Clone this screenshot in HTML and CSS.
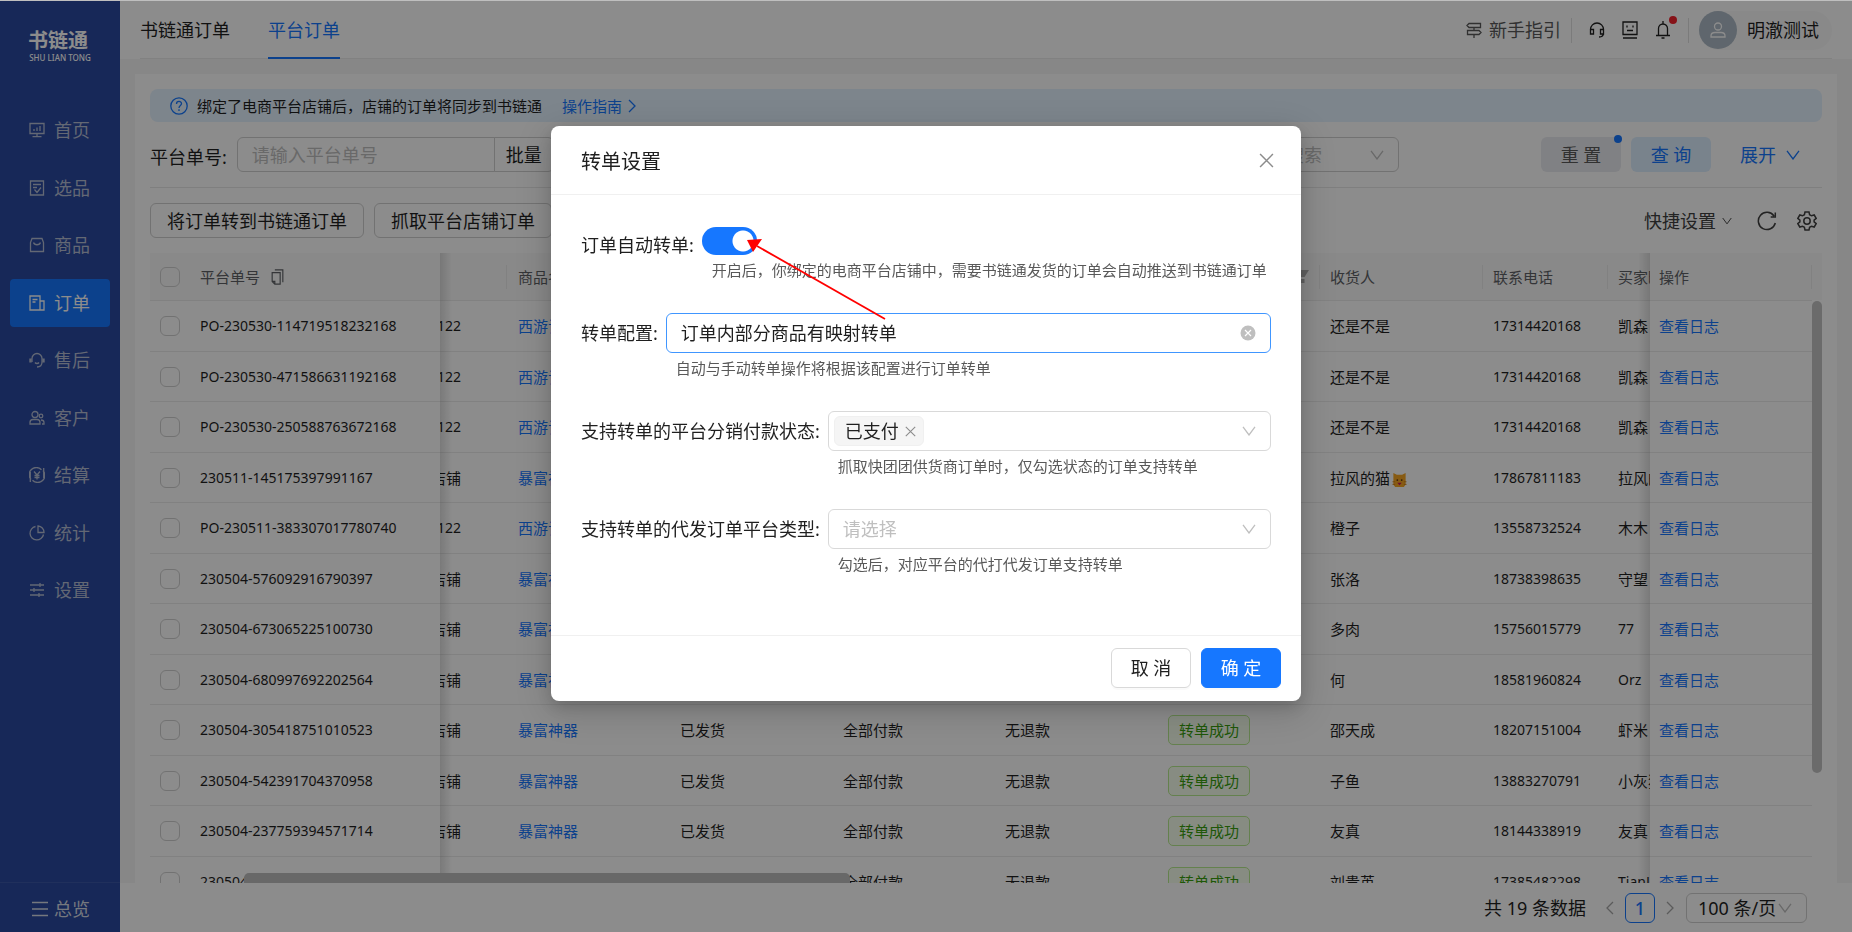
FILE: index.html
```html
<!DOCTYPE html>
<html lang="zh-CN">
<head>
<meta charset="utf-8">
<meta name="viewport" content="width=device-width, initial-scale=1">
<title>书链通 - 平台订单</title>
<link rel="stylesheet" href="styles.css">
</head>
<body>
<svg class="sprite" aria-hidden="true">
  <symbol id="chevron" viewBox="0 0 14 10"><path d="M1 .8 7 9 13 .8" fill="none" stroke="currentColor" stroke-width="1.3"/></symbol>
  <symbol id="cross" viewBox="0 0 14 14"><path d="M1 1l12 12M13 1 1 13" fill="none" stroke="currentColor" stroke-width="1.4"/></symbol>
</svg>
<div class="app">
  <aside class="sidebar">
    <div class="logo"><span class="logo-name">书链通</span><span class="logo-sub">SHU LIAN TONG</span></div>
    <nav class="menu">
      <a class="menu-item" href="#"><svg class="icon16" viewBox="0 0 16 16"><path d="M1 1.500h14v10H1zM8 11.500v3M3.500 14.700h9M5 9V7M8 9V5.500M11 9V4"/></svg>首页</a>
      <a class="menu-item" href="#"><svg class="icon16" viewBox="0 0 16 16"><path d="M1.500 1h13v14h-13zM4 4.500h8M4 7.500h4M5.500 9.500l2.500 3 4-5"/></svg>选品</a>
      <a class="menu-item" href="#"><svg class="icon16" viewBox="0 0 16 16"><path d="M3 1.500h10l1.500 4v9h-13v-9zM4.500 5.500c1 3 6 3 7 0"/></svg>商品</a>
      <a class="menu-item active" href="#"><svg class="icon16" viewBox="0 0 16 16"><path d="M1 1h10v14H1zM11 6h4v9h-4M3.500 4.500h5M3.500 7h3"/></svg>订单</a>
      <a class="menu-item" href="#"><svg class="icon16" viewBox="0 0 16 16"><path d="M3 10V6.500a5 5 0 0 1 10 0V10c0 3-2 5-5 5M6 10.500c1 1.300 3 1.300 4 0"/><path d="M1.500 6.500v4M14.500 6.500v4" stroke-width="2.400"/></svg>售后</a>
      <a class="menu-item" href="#"><svg class="icon16" viewBox="0 0 16 16"><circle cx="6" cy="4.500" r="3"/><circle cx="12" cy="6" r="1.800"/><path d="M1 14v-1.500c0-2 1.500-3 3-3h4c1.500 0 3 1 3 3V14zM12 10c2 0 3 1 3 2.500V14h-2"/></svg>客户</a>
      <a class="menu-item" href="#"><svg class="icon16" viewBox="0 0 16 16"><path d="M2 12.500A7 7 0 0 1 12.500 2.800M14 3.500A7 7 0 0 1 3.500 13.200M14.700 1v10M1.300 5v10M5 4.500l3 3.500 3-3.500M8 8v4.500M5.500 8.500h5M5.500 10.500h5"/></svg>结算</a>
      <a class="menu-item" href="#"><svg class="icon16" viewBox="0 0 16 16"><path d="M6.500 1.500a6.800 6.800 0 1 0 8 8M9 1v6.500h6C15 4 12.500 1.200 9 1z"/></svg>统计</a>
      <a class="menu-item" href="#"><svg class="icon16" viewBox="0 0 16 16"><path d="M1 3h14M1 8h14M1 13h14M11 1v4M5 6v4M10 11v4"/></svg>设置</a>
    </nav>
    <a class="overview" href="#"><svg class="icon16" viewBox="0 0 16 16"><path d="M0 1.500h16M0 8h16M0 14.500h16"/></svg>总览</a>
  </aside>

  <div class="main">
    <header class="topbar">
      <nav class="tabs">
        <a class="tab" href="#">书链通订单</a>
        <a class="tab current" href="#">平台订单</a>
      </nav>
      <div class="tools">
        <a class="guide" href="#"><svg class="icon16" viewBox="0 0 16 16"><path d="M3 1.500h11.500v4H3L1 3.500zM13 8.500H1.500v4H13l2-2zM8 5.500v3M8 12.500V16"/></svg>新手指引</a>
        <span class="bar"></span>
        <button class="tool" aria-label="客服"><svg class="icon16" viewBox="0 0 16 16"><path d="M1.500 9V7.500a6.500 6.500 0 0 1 13 0V11c0 2.500-2 4-4.500 4M1.500 7.500h3v4.500h-3zM11.500 7.500h3v4.500h-3z"/></svg></button>
        <button class="tool" aria-label="帮助"><svg class="icon16" viewBox="0 0 16 18"><path d="M1 1h14v12.500H1zM1 17h14M5 4.500v2M11 4.500v2M5 9.500h6"/></svg></button>
        <button class="tool bell" aria-label="通知"><svg class="icon16" viewBox="0 0 16 18"><path d="M3.500 14V7.500a4.500 4.500 0 0 1 9 0V14M1 14.500h14M8 0v3M6.500 17h3"/></svg><i class="dot"></i></button>
        <span class="bar"></span>
        <button class="user"><span class="avatar"><svg class="icon16" viewBox="0 0 16 16"><circle cx="8" cy="4.500" r="3.500"/><path d="M1 15v-1c0-2.500 2-3.500 4-3.500h6c2 0 4 1 4 3.500v1z"/></svg></span>明澈测试</button>
      </div>
    </header>

    <main class="content">
      <section class="card">
        <div class="notice">
          <svg class="icon18" viewBox="0 0 18 18"><circle cx="9" cy="9" r="8.200"/><path d="M6.500 7c0-3.500 5-3.200 5-.4C11.500 8.500 9 8.500 9 11M9 12.300v1.600"/></svg>
          <span>绑定了电商平台店铺后，店铺的订单将同步到书链通</span>
          <a href="#">操作指南<svg class="arrow" viewBox="0 0 8 14"><path d="M1 1l6 6-6 6"/></svg></a>
        </div>

        <form class="search">
          <label for="order-no">平台单号:</label>
          <input id="order-no" type="text" placeholder="请输入平台单号">
          <button type="button" class="batch">批量</button>
          <span class="pick">
            <select aria-label="商品搜索"><option>请选择或搜索</option></select>
            <svg class="chev"><use href="#chevron"/></svg>
          </span>
          <button type="button" class="reset">重 置<i class="dot"></i></button>
          <button type="button" class="query">查 询</button>
          <button type="button" class="expand">展开<svg class="chev"><use href="#chevron"/></svg></button>
        </form>

        <div class="actions">
          <button>将订单转到书链通订单</button>
          <button>抓取平台店铺订单</button>
          <div class="quick">
            <button>快捷设置<svg class="chev-small"><use href="#chevron"/></svg></button>
            <button aria-label="刷新"><svg class="icon20" viewBox="0 0 20 20"><path d="M17 5A8.600 8.600 0 1 0 18.300 12M18.300 1.500V6h-4.600"/></svg></button>
            <button aria-label="设置"><svg class="icon20" viewBox="0 0 20 20"><path d="M8 1h4l.6 2.700 1.900 1.100L17.200 4l2 3.400-2.100 1.800v1.600l2.100 1.800-2 3.400-2.700-.8-1.900 1.100L12 19H8l-.6-2.700-1.900-1.100-2.700.8-2-3.400 2.100-1.800V9.200L.8 7.400l2-3.400 2.700.8 1.900-1.100z"/><circle cx="10" cy="10" r="3.200"/></svg></button>
          </div>
        </div>

        <div class="table-wrap">
          <table class="orders">
            <colgroup><col class="c-check"><col class="c-id"><col class="c-shop"><col class="c-a"><col class="c-b"><col class="c-a"><col class="c-b"><col class="c-b"><col class="c-b"><col class="c-phone"><col class="c-buyer"><col></colgroup>
            <thead><tr>
              <th><input type="checkbox" aria-label="全选"></th>
              <th class="plain">平台单号<svg class="copy" viewBox="0 0 14 18"><path d="M4 1h9v14M1 4h9v13H4l-3-3zM1 14h3v3"/></svg></th>
              <th></th><th>商品名称</th><th>发货状态</th><th>付款状态</th><th>退款状态</th>
              <th><span class="filter-head">转单状态<svg class="funnel" viewBox="0 0 14 13"><path d="M0 0h14L9.500 7h-5zM4.500 9h5v4h-5z"/></svg></span></th>
              <th>收货人</th><th>联系电话</th><th class="plain">买家昵称</th><th>操作</th>
            </tr></thead>
            <tbody>
              <tr><td><input type="checkbox" aria-label="选择"></td><td class="num">PO-230530-114719518232168</td><td><span class="shop num">122</span></td><td><a href="#">西游记</a></td><td>已发货</td><td>全部付款</td><td>无退款</td><td><span class="tag">转单成功</span></td><td>还是不是</td><td class="num">17314420168</td><td>凯森</td><td><a href="#">查看日志</a></td></tr>
              <tr><td><input type="checkbox" aria-label="选择"></td><td class="num">PO-230530-471586631192168</td><td><span class="shop num">122</span></td><td><a href="#">西游记</a></td><td>已发货</td><td>全部付款</td><td>无退款</td><td><span class="tag">转单成功</span></td><td>还是不是</td><td class="num">17314420168</td><td>凯森</td><td><a href="#">查看日志</a></td></tr>
              <tr><td><input type="checkbox" aria-label="选择"></td><td class="num">PO-230530-250588763672168</td><td><span class="shop num">122</span></td><td><a href="#">西游记</a></td><td>已发货</td><td>全部付款</td><td>无退款</td><td><span class="tag">转单成功</span></td><td>还是不是</td><td class="num">17314420168</td><td>凯森</td><td><a href="#">查看日志</a></td></tr>
              <tr><td><input type="checkbox" aria-label="选择"></td><td class="num">230511-145175397991167</td><td><span class="shop">店铺</span></td><td><a href="#">暴富神器</a></td><td>已发货</td><td>全部付款</td><td>无退款</td><td><span class="tag">转单成功</span></td><td>拉风的猫<svg class="cat" viewBox="0 0 16 16" role="img" aria-label="猫"><path d="M1 0l4 2h6l4-2v13l-2 3H3l-2-3z" fill="#f6a623"/><path d="M0 10h3M0 13h3M13 10h3M13 13h3" stroke="#c77a16"/><circle cx="5.500" cy="8" r="1" fill="#5d3212"/><circle cx="10.500" cy="8" r="1" fill="#5d3212"/><path d="M5.500 11h5L8 14z" fill="#c2185b"/></svg></td><td class="num">17867811183</td><td>拉风的猫</td><td><a href="#">查看日志</a></td></tr>
              <tr><td><input type="checkbox" aria-label="选择"></td><td class="num">PO-230511-383307017780740</td><td><span class="shop num">122</span></td><td><a href="#">西游记</a></td><td>已发货</td><td>全部付款</td><td>无退款</td><td><span class="tag">转单成功</span></td><td>橙子</td><td class="num">13558732524</td><td>木木</td><td><a href="#">查看日志</a></td></tr>
              <tr><td><input type="checkbox" aria-label="选择"></td><td class="num">230504-576092916790397</td><td><span class="shop">店铺</span></td><td><a href="#">暴富神器</a></td><td>已发货</td><td>全部付款</td><td>无退款</td><td><span class="tag">转单成功</span></td><td>张洛</td><td class="num">18738398635</td><td>守望</td><td><a href="#">查看日志</a></td></tr>
              <tr><td><input type="checkbox" aria-label="选择"></td><td class="num">230504-673065225100730</td><td><span class="shop">店铺</span></td><td><a href="#">暴富神器</a></td><td>已发货</td><td>全部付款</td><td>无退款</td><td><span class="tag">转单成功</span></td><td>多肉</td><td class="num">15756015779</td><td class="num">77</td><td><a href="#">查看日志</a></td></tr>
              <tr><td><input type="checkbox" aria-label="选择"></td><td class="num">230504-680997692202564</td><td><span class="shop">店铺</span></td><td><a href="#">暴富神器</a></td><td>已发货</td><td>全部付款</td><td>无退款</td><td><span class="tag">转单成功</span></td><td>何</td><td class="num">18581960824</td><td class="num">Orz</td><td><a href="#">查看日志</a></td></tr>
              <tr><td><input type="checkbox" aria-label="选择"></td><td class="num">230504-305418751010523</td><td><span class="shop">店铺</span></td><td><a href="#">暴富神器</a></td><td>已发货</td><td>全部付款</td><td>无退款</td><td><span class="tag">转单成功</span></td><td>邵天成</td><td class="num">18207151004</td><td>虾米</td><td><a href="#">查看日志</a></td></tr>
              <tr><td><input type="checkbox" aria-label="选择"></td><td class="num">230504-542391704370958</td><td><span class="shop">店铺</span></td><td><a href="#">暴富神器</a></td><td>已发货</td><td>全部付款</td><td>无退款</td><td><span class="tag">转单成功</span></td><td>子鱼</td><td class="num">13883270791</td><td>小灰狼</td><td><a href="#">查看日志</a></td></tr>
              <tr><td><input type="checkbox" aria-label="选择"></td><td class="num">230504-237759394571714</td><td><span class="shop">店铺</span></td><td><a href="#">暴富神器</a></td><td>已发货</td><td>全部付款</td><td>无退款</td><td><span class="tag">转单成功</span></td><td>友真</td><td class="num">18144338919</td><td>友真</td><td><a href="#">查看日志</a></td></tr>
              <tr><td><input type="checkbox" aria-label="选择"></td><td class="num">230504</td><td></td><td><a href="#">暴富神器</a></td><td>已发货</td><td>全部付款</td><td>无退款</td><td><span class="tag">转单成功</span></td><td>刘贵英</td><td class="num">17385482298</td><td class="num">TianLi</td><td><a href="#">查看日志</a></td></tr>
            </tbody>
          </table>
          <div class="vscroll"><div class="vthumb"></div></div>
          <div class="shade shade-left"></div>
          <div class="shade shade-right"></div>
          <div class="hthumb"></div>
        </div>
      </section>
    </main>

    <footer class="pager">
      <span class="total">共 19 条数据</span>
      <button class="step" aria-label="上一页"><svg class="arrow" viewBox="0 0 8 14"><path d="M7 1 1 7l6 6"/></svg></button>
      <button class="page">1</button>
      <button class="step" aria-label="下一页"><svg class="arrow" viewBox="0 0 8 14"><path d="M1 1l6 6-6 6"/></svg></button>
      <span class="size">
        <select aria-label="每页条数"><option>100 条/页</option></select>
        <svg class="chev"><use href="#chevron"/></svg>
      </span>
    </footer>
  </div>
</div>

<div class="mask">
  <div class="modal" role="dialog" aria-modal="true" aria-labelledby="modal-title">
    <div class="modal-head">
      <h2 id="modal-title">转单设置</h2>
      <button class="close" aria-label="关闭"><svg><use href="#cross"/></svg></button>
    </div>
    <div class="modal-body">
      <div class="row row-switch">
        <label class="label" for="auto">订单自动转单:</label>
        <div class="field">
          <input id="auto" class="switch" type="checkbox" role="switch" checked>
          <p class="help">开启后，你绑定的电商平台店铺中，需要书链通发货的订单会自动推送到书链通订单</p>
        </div>
      </div>
      <div class="row">
        <label class="label" for="config">转单配置:</label>
        <div class="field">
          <div class="box focus">
            <select id="config"><option>订单内部分商品有映射转单</option></select>
            <button class="clear" aria-label="清除"><svg viewBox="0 0 16 16"><circle cx="8" cy="8" r="7.500" fill="#bfbfbf"/><path d="M5 5l6 6M11 5l-6 6" stroke="#fff" stroke-width="1.200"/></svg></button>
          </div>
          <p class="help">自动与手动转单操作将根据该配置进行订单转单</p>
        </div>
      </div>
      <div class="row">
        <label class="label" for="pay-state">支持转单的平台分销付款状态:</label>
        <div class="field">
          <div class="box tags">
            <span class="chip">已支付<button aria-label="移除"><svg><use href="#cross"/></svg></button></span>
            <input id="pay-state" type="text">
            <svg class="chev"><use href="#chevron"/></svg>
          </div>
          <p class="help">抓取快团团供货商订单时，仅勾选状态的订单支持转单</p>
        </div>
      </div>
      <div class="row">
        <label class="label" for="platform">支持转单的代发订单平台类型:</label>
        <div class="field">
          <div class="box">
            <select id="platform" class="empty"><option>请选择</option></select>
            <svg class="chev"><use href="#chevron"/></svg>
          </div>
          <p class="help">勾选后，对应平台的代打代发订单支持转单</p>
        </div>
      </div>
    </div>
    <div class="modal-foot">
      <button class="btn">取 消</button>
      <button class="btn primary">确 定</button>
    </div>
    <svg class="pointer" viewBox="0 0 140 82" aria-hidden="true"><path d="M138 80 10 7" stroke="#f00" stroke-width="1.800"/><path d="M0 1 15 0 6 13z" fill="#f00"/></svg>
  </div>
</div>
</body>
</html>
```

FILE: styles.css
```css
* { box-sizing: border-box; }
html, body { height: 100%; }
body {
  margin: 0;
  border-top: 1px solid #bfbfbf;
  overflow: hidden;
  font-family: "Noto Sans", "Noto Sans CJK SC", sans-serif;
  font-size: 18px;
  font-weight: 400;
  line-height: 24px;
  color: #1f1f1f;
}
a { color: #1677ff; text-decoration: none; }
button, input, select { font: inherit; color: inherit; margin: 0; padding: 0; border: 0; background: none; border-radius: 0; }
select { appearance: none; outline: 0; opacity: 1; }
button { white-space: nowrap; }
svg { flex: none; fill: none; stroke: currentColor; }
p, h2 { margin: 0; font-weight: inherit; }
.sprite { position: absolute; width: 0; height: 0; }
.icon16 { width: 16px; height: 16px; }
.icon18 { width: 18px; height: 18px; }
.icon20 { width: 20px; height: 20px; }
.icon16, .icon18 { stroke-width: 1.3; }
.icon20 { stroke-width: 1.5; }
.chev { width: 14px; height: 10px; stroke: none; color: #bfbfbf; }
.chev-small { width: 10px; height: 8px; stroke: none; }
.arrow { width: 8px; height: 14px; stroke-width: 1.3; }

.app { display: grid; grid-template-columns: 120px 1fr; height: 100%; }

/* sidebar */
.sidebar { display: flex; flex-direction: column; background: #2a49a0; color: #c3cad9; }
.logo { display: flex; flex-direction: column; align-items: center; padding: 28px 4px 0 0; color: #fff; }
.logo-name { font-size: 20px; font-weight: 700; line-height: 24px; }
.logo-sub { padding-left: 4px; font-size: 8px; font-weight: 500; line-height: 10px; }
.menu { display: flex; flex-direction: column; justify-content: space-between; height: 508px; margin: 43px 10px 0; }
.menu-item { display: flex; align-items: center; gap: 9px; height: 48px; padding-left: 19px; border-radius: 4px; color: #b4bdd4; }
.menu-item.active { background: #1677ff; color: #fff; }
.overview { display: flex; align-items: center; gap: 6px; height: 50px; margin-top: auto; padding: 2px 0 0 32px; border-top: 1px solid #3b58a8; color: #d5dae6; }

/* top bar */
.main { display: flex; flex-direction: column; min-width: 0; min-height: 0; }
.topbar { display: flex; justify-content: space-between; height: 58px; padding: 0 20px; background: linear-gradient(#ececec, #ececec) 20px 100% / calc(100% - 40px) 1px no-repeat #fff; }
.tabs { display: flex; gap: 38px; }
.tab { display: flex; align-items: center; padding-top: 2px; border-bottom: 2px solid transparent; color: #1f1f1f; }
.tab.current { color: #1677ff; border-color: #1677ff; }
.tools { display: flex; align-items: center; gap: 10px; }
.guide { display: flex; align-items: center; gap: 7px; color: #595959; }
.bar { width: 1px; height: 25px; background: #e0e0e0; }
.tool { display: flex; width: 16px; margin-left: 7px; }
.tool .icon16 { height: 18px; }
.tool + .bar { margin-left: 7px; }
.bell { position: relative; }
.dot { position: absolute; width: 8px; height: 8px; border-radius: 4px; }
.bell .dot { top: -5px; right: -6px; background: #f5222d; }
.user { display: flex; align-items: center; gap: 10px; height: 39px; padding-right: 13px; border-radius: 20px; background: #fafafa; }
.avatar { display: grid; place-items: center; width: 38px; height: 38px; border-radius: 50%; background: #adbac6; color: #fff; }

/* content */
.content { flex: 1; min-height: 0; padding: 15px 15px 0; background: #f6f6f6; }
.card { display: flex; flex-direction: column; height: 100%; padding: 15px 15px 0; background: #fff; }
.notice { display: flex; align-items: center; height: 33px; padding-left: 20px; border-radius: 8px; background: #e3f2ff; font-size: 15px; }
.notice svg { color: #1677ff; }
.notice span { margin-left: 9px; }
.notice a { display: flex; align-items: center; gap: 6px; margin-left: 20px; }
.search { display: flex; align-items: center; height: 66px; border-bottom: 1px solid #e8e8e8; }
.search label { margin-right: 10px; padding-top: 4px; }
.search input { width: 258px; height: 35px; padding: 0 14px; border: 1px solid #d0d0d0; border-radius: 6px 0 0 6px; }
.search input::placeholder { color: #bfbfbf; opacity: 1; }
.batch { width: 60px; height: 35px; margin-left: -1px; border: 1px solid #d0d0d0; border-radius: 0 6px 6px 0; }
.pick { display: flex; align-items: center; width: 200px; height: 35px; margin-left: auto; padding: 0 14px; border: 1px solid #d0d0d0; border-radius: 6px; }
.pick select { flex: 1; color: #bfbfbf; }
.reset, .query { width: 80px; height: 35px; border-radius: 6px; }
.reset { position: relative; margin-left: 142px; background: #eaebf0; color: #595959; }
.reset .dot { top: -2px; right: -1px; background: #1677ff; }
.query { margin-left: 10px; background: #dceeff; color: #1677ff; }
.expand { display: flex; align-items: center; gap: 10px; margin: 0 22px 0 29px; color: #1677ff; }
.expand .chev { color: #1677ff; }
.actions { display: flex; gap: 10px; height: 65px; padding-top: 15px; }
.actions > button { height: 35px; padding: 0 16px; border: 1px solid #d0d0d0; border-radius: 6px; }
.quick { display: flex; align-items: center; gap: 20px; height: 35px; margin-left: auto; padding-right: 5px; color: #404040; }
.quick button { display: flex; align-items: center; gap: 6px; }
.quick button:first-child { margin-right: 5px; }

/* orders table */
.table-wrap { position: relative; display: grid; grid-template-columns: 1fr 10px; flex: 1; min-height: 0; overflow: hidden; align-items: start; }
.orders { width: 100%; table-layout: fixed; border-collapse: separate; border-spacing: 0; font-size: 15px; line-height: 22px; }
.c-check { width: 50px; }
.c-id { width: 240px; }
.c-shop { width: 67px; }
.c-a { width: 162px; }
.c-b { width: 163px; }
.c-phone { width: 125px; }
.c-buyer { width: 42px; }
.orders th, .orders td { padding: 0 0 0 11px; border-bottom: 1px solid #ececec; text-align: left; white-space: nowrap; overflow: hidden; font-weight: inherit; }
.orders th { height: 48px; background: linear-gradient(#ececec, #ececec) 100% 50% / 1px 24px no-repeat #fafafa; color: #5f6266; }
.orders th:first-child, .orders th.plain { background: #fafafa; }
.orders th:nth-child(2), .orders td:nth-child(2) { padding-left: 0; }
.orders th:last-child, .orders td:last-child { padding-left: 9px; }
.orders tr > :nth-child(10), .orders tr > :nth-child(11), .orders tr > :nth-child(9) { padding-left: 10px; }
.orders td { height: 50px; }
.orders tr:nth-child(odd) td { height: 51px; }
.orders td:nth-child(3) { padding-left: 0; }
.orders .num { font-size: 14px; }
.orders input { display: block; appearance: none; width: 20px; height: 20px; border: 1px solid #d0d0d0; border-radius: 6px; }
.orders th:first-child, .orders td:first-child { padding-left: 10px; }
.shop { display: flex; justify-content: flex-end; width: 21px; overflow: hidden; }
.tag { display: inline-block; height: 30px; padding: 0 10px; border: 1px solid #b7eb8f; border-radius: 5px; background: #f6ffed; color: #389e0d; line-height: 28px; vertical-align: middle; }
.copy { width: 13px; height: 16px; margin-left: 11px; vertical-align: -2px; stroke-width: 1.3; }
.filter-head { display: flex; justify-content: space-between; align-items: center; padding-right: 11px; }
.funnel { width: 14px; height: 13px; fill: #b0b0b0; stroke: none; }
.cat { width: 15px; height: 14px; margin-left: 2px; vertical-align: -3px; stroke: none; }
.vscroll { height: 100%; padding-top: 48px; background: linear-gradient(#fafafa, #fafafa) 0 0 / 100% 47px no-repeat; }
.vthumb { height: 472px; border-radius: 5px; background: #c4c4c4; }
.shade { position: absolute; top: 0; bottom: 0; width: 12px; }
.shade-left { left: 290px; background: linear-gradient(to right, rgba(0, 0, 0, .13), transparent); }
.shade-right { right: 172px; background: linear-gradient(to left, rgba(0, 0, 0, .13), transparent); }
.hthumb { position: absolute; left: 94px; bottom: 0; width: 606px; height: 10px; border-radius: 5px 5px 0 0; background: #bdbdbd; }

/* pagination */
.pager { display: flex; align-items: center; justify-content: flex-end; height: 49px; padding: 1px 45px 0 0; }
.total { margin-right: 20px; }
.step { display: flex; color: #a6a6a6; }
.page { width: 30px; height: 30px; margin: 0 11px; border: 1px solid #1677ff; border-radius: 6px; color: #1677ff; font-weight: 500; }
.size { display: flex; align-items: center; height: 30px; margin-left: 12px; padding: 0 14px 0 11px; border: 1px solid #d0d0d0; border-radius: 6px; }
.size select { width: 80px; }

/* dialog */
.mask { position: fixed; inset: 1px 0 0; display: flex; justify-content: center; align-items: flex-start; padding-top: 125px; background: rgba(0, 0, 0, .45); }
.modal { position: relative; width: 750px; border-radius: 8px; background: #fff; box-shadow: 0 6px 16px rgba(0, 0, 0, .16), 0 9px 36px 8px rgba(0, 0, 0, .12); }
.modal-head { display: flex; justify-content: space-between; align-items: center; height: 69px; padding: 0 27px 0 30px; border-bottom: 1px solid #f0f0f0; }
.modal-head h2 { padding-top: 3px; font-size: 20px; line-height: 28px; }
.close { display: flex; color: #8c8c8c; }
.close svg { width: 15px; height: 15px; stroke: none; }
.modal-body { display: flex; flex-direction: column; gap: 32px; padding: 32px 30px 60px; }
.row { display: flex; gap: 8px; }
.label { line-height: 40px; white-space: nowrap; }
.row-switch .label { line-height: 36px; }
.field { display: flex; flex-direction: column; gap: 4px; flex: 1; min-width: 0; }
.help { padding-left: 10px; font-size: 15px; line-height: 22px; color: #595959; white-space: nowrap; }
.switch { appearance: none; width: 55px; height: 28px; border-radius: 14px; background: radial-gradient(circle 11px at 41px 14px, #fff 10px, transparent 11px) #1677ff; }
.box { display: flex; align-items: center; height: 40px; padding: 0 14px; border: 1px solid #d9d9d9; border-radius: 6px; }
.box.focus { border-color: #4096ff; }
.box select { flex: 1; min-width: 0; }
.box select.empty { color: #bfbfbf; }
.box input { flex: 1; min-width: 0; }
.tags { padding-left: 5px; }
.clear { display: flex; }
.clear svg { width: 16px; height: 16px; stroke: none; }
.chip { display: flex; align-items: center; gap: 6px; height: 30px; padding: 0 7px 0 10px; border: 1px solid #f0f0f0; border-radius: 6px; background: #f5f5f5; }
.chip button { display: flex; color: #8c8c8c; }
.chip svg { width: 11px; height: 11px; stroke: none; }
.modal-foot { display: flex; justify-content: flex-end; gap: 10px; padding: 12px 20px 13px; border-top: 1px solid #f0f0f0; }
.btn { width: 80px; height: 40px; border: 1px solid #d9d9d9; border-radius: 6px; box-shadow: 0 2px 0 rgba(0, 0, 0, .02); }
.btn.primary { border-color: #1677ff; background: #1677ff; color: #fff; }
.pointer { position: absolute; left: 196px; top: 113px; width: 140px; height: 82px; stroke: none; }
```
